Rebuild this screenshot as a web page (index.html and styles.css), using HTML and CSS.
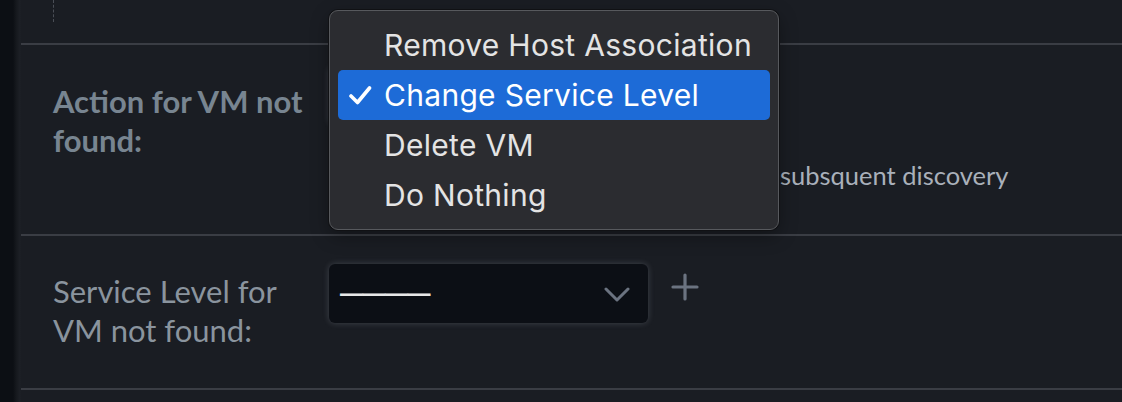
FILE: index.html
```html
<!DOCTYPE html>
<html lang="en">
<head>
<meta charset="utf-8">
<title>VM discovery settings</title>
<link rel="stylesheet" href="styles.css">
</head>
<body>
<div class="app">
  <aside class="sidebar"></aside>
  <main class="main">
    <div class="row row-top">
      <div class="dots"></div>
    </div>
    <div class="row row-action">
      <div class="label label-strong">Action for VM not found:</div>
      <div class="field">
        <div class="select select-hidden"><span class="value">Change Service Level</span></div>
        <div class="desc"><span class="desc-clip">Change service level of VMs not found during</span><span>subsquent discovery</span></div>
      </div>
      <div class="menu">
        <div class="item">Remove Host Association</div>
        <div class="item selected"><svg class="check" viewBox="0 0 24 20" width="24" height="20"><path d="M3 11 L9.5 17.5 L21.5 3" fill="none" stroke="#fff" stroke-width="3.6" stroke-linecap="round" stroke-linejoin="round"/></svg>Change Service Level</div>
        <div class="item">Delete VM</div>
        <div class="item">Do Nothing</div>
      </div>
    </div>
    <div class="row row-service">
      <div class="label">Service Level for VM not found:</div>
      <div class="field field-inline">
        <div class="select">
          <span class="value dash">————</span>
          <svg class="chev" viewBox="0 0 26 15" width="26" height="15"><path d="M2 2 L13 13 L24 2" fill="none" stroke="#6b7380" stroke-width="3" stroke-linecap="round" stroke-linejoin="round"/></svg>
        </div>
        <svg class="plus" viewBox="0 0 28 28" width="28" height="28"><path d="M14 2 V26 M2 14 H26" fill="none" stroke="#6b7380" stroke-width="3.2" stroke-linecap="round"/></svg>
      </div>
    </div>
    <div class="row row-bottom"></div>
  </main>
</div>
</body>
</html>
```

FILE: styles.css
```css
* { box-sizing: border-box; }
html, body { margin: 0; padding: 0; }
body {
  background: #1a1d23;
  width: 1122px;
  height: 402px;
  overflow: hidden;
  font-family: "Lato", "Open Sans", sans-serif;
}
.app {
  display: flex;
  height: 402px;
}
.sidebar {
  width: 21px;
  flex: none;
  background: linear-gradient(to right, #0c0f14 0, #0c0f14 13px, #15181d 16px, #1d2026 20px, #1a1d23 21px);
}
.main {
  flex: 1;
  display: flex;
  flex-direction: column;
  position: relative;
}
.row {
  display: flex;
  border-bottom: 2px solid #3a3d44;
  position: relative;
}
.row-top {
  height: 45px;
  padding-left: 32px;
}
.dots {
  width: 0;
  height: 22px;
  border-left: 1px dashed #4a4e56;
}
.row-action {
  height: 191px;
}
.row-service {
  height: 154px;
}
.row-bottom {
  border-bottom: none;
  flex: 1;
}
.label {
  width: 308px;
  flex: none;
  padding-left: 32px;
  padding-right: 20px;
  padding-top: 36px;
  font-size: 31px;
  line-height: 39px;
  color: #8a949e;
}
.label-strong {
  font-weight: 700;
  color: #788591;
  padding-top: 37px;
}
.field {
  display: flex;
  flex-direction: column;
}
.row-action .field { padding-top: 21px; }
.row-service .field { padding-top: 28px; }
.field-inline {
  flex-direction: row;
  align-items: flex-start;
  gap: 23px;
}
.select {
  width: 319px;
  height: 59px;
  border-radius: 6px;
  background: #0c0f15;
  box-shadow: 0 0 6px rgba(200, 210, 225, 0.22);
  display: flex;
  align-items: center;
  justify-content: space-between;
  padding: 0 18px 0 11px;
}
.value {
  color: #e8e8e8;
  font-family: "Liberation Sans", sans-serif;
  font-size: 22.5px;
}
.dash {
  font-size: 23px;
  font-weight: 700;
  letter-spacing: -0.5px;
}
.chev { margin-top: 1px; }
.plus { margin-top: 9px; }
.desc {
  margin-top: 35px;
  display: flex;
  white-space: nowrap;
  font-size: 25.5px;
  line-height: 30px;
  color: #a9b0ba;
}
.desc-clip {
  width: 451px;
  overflow: hidden;
  flex: none;
}
.menu {
  position: absolute;
  left: 308px;
  top: -35px;
  width: 450px;
  height: 220px;
  background: #2b2c30;
  border: 1px solid #57595d;
  border-radius: 9px;
  box-shadow: 0 0 0 1px #101114, 0 6px 18px rgba(0, 0, 0, 0.35);
  padding: 9px 8px;
  font-family: "Inter", "Liberation Sans", sans-serif;
  z-index: 2;
}
.item {
  height: 50px;
  display: flex;
  align-items: center;
  padding-left: 46px;
  font-size: 30px;
  letter-spacing: 0.3px;
  color: #e4e4e4;
  border-radius: 5px;
  position: relative;
  white-space: nowrap;
}
.item.selected {
  background: #1d6bd7;
  color: #ffffff;
}
.check {
  position: absolute;
  left: 10px;
  top: 15px;
}
```
